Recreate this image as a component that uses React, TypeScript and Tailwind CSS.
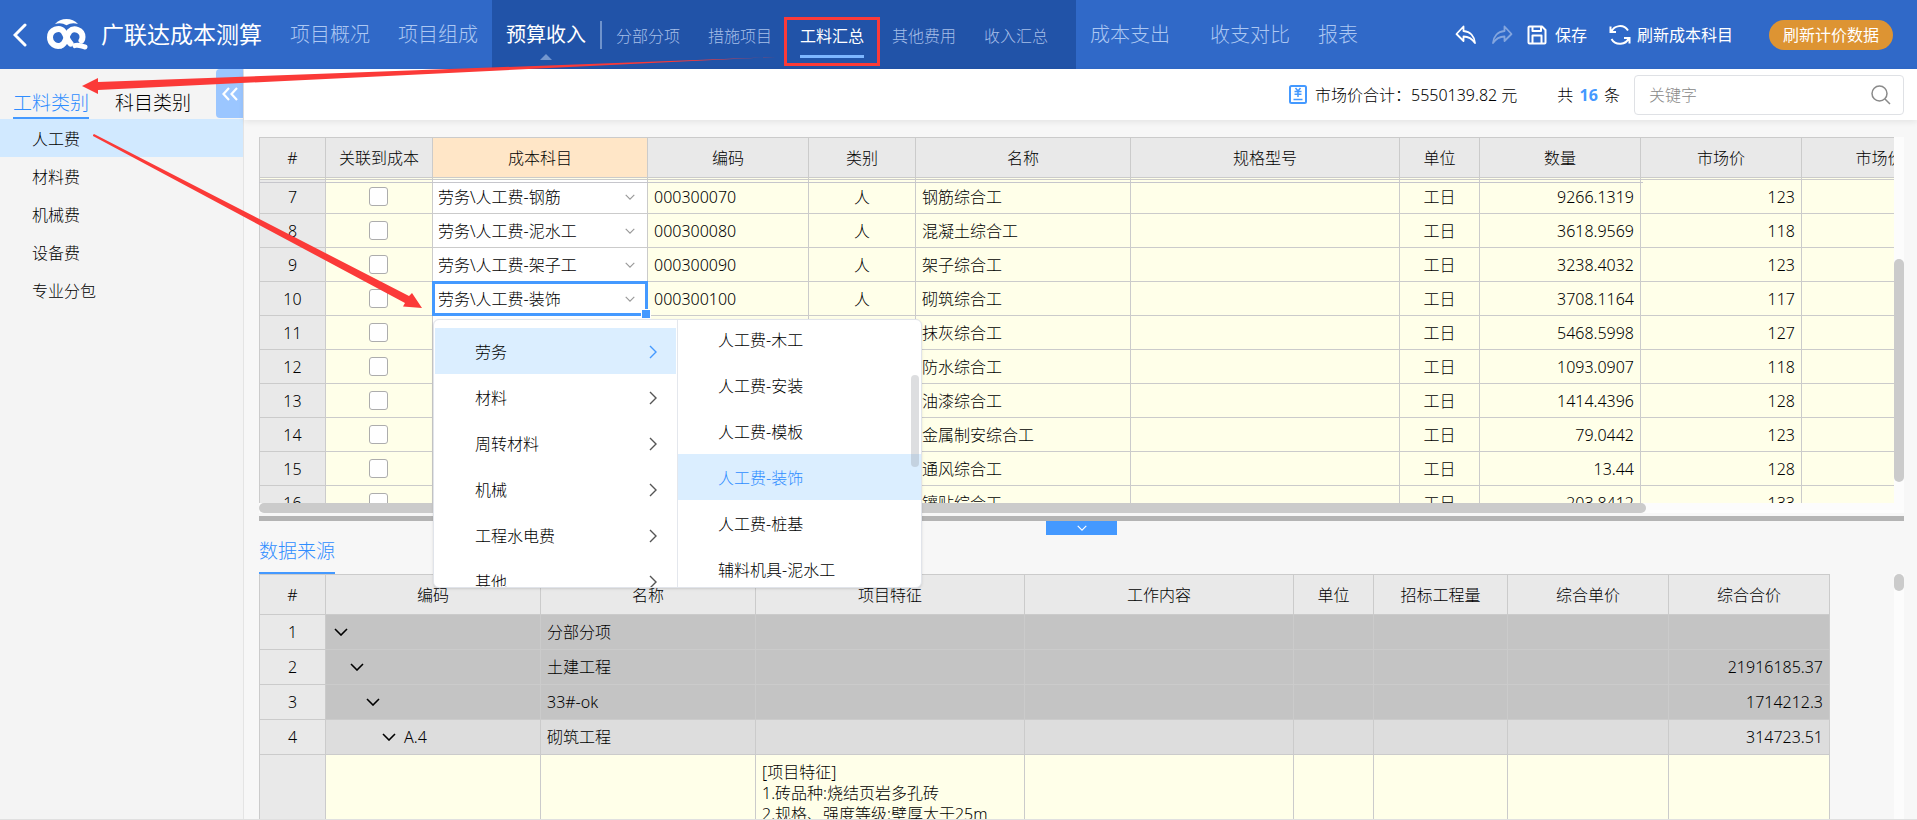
import clsx from 'clsx';
import type { ReactNode } from 'react';

interface Material {
  no: number;
  subject: string;
  code: string;
  name: string;
  qty: string;
  price: string;
}

interface SourceRow {
  no: number;
  depth: number;
  code?: string;
  name: string;
  total?: string;
}

const SUB_TABS = ['分部分项', '措施项目', '工料汇总', '其他费用', '收入汇总'];

const CATEGORIES = ['人工费', '材料费', '机械费', '设备费', '专业分包'];

const MATERIALS: Material[] = [
  { no: 7, subject: '劳务\\人工费-钢筋', code: '000300070', name: '钢筋综合工', qty: '9266.1319', price: '123' },
  { no: 8, subject: '劳务\\人工费-泥水工', code: '000300080', name: '混凝土综合工', qty: '3618.9569', price: '118' },
  { no: 9, subject: '劳务\\人工费-架子工', code: '000300090', name: '架子综合工', qty: '3238.4032', price: '123' },
  { no: 10, subject: '劳务\\人工费-装饰', code: '000300100', name: '砌筑综合工', qty: '3708.1164', price: '117' },
  { no: 11, subject: '', code: '', name: '抹灰综合工', qty: '5468.5998', price: '127' },
  { no: 12, subject: '', code: '', name: '防水综合工', qty: '1093.0907', price: '118' },
  { no: 13, subject: '', code: '', name: '油漆综合工', qty: '1414.4396', price: '128' },
  { no: 14, subject: '', code: '', name: '金属制安综合工', qty: '79.0442', price: '123' },
  { no: 15, subject: '', code: '', name: '通风综合工', qty: '13.44', price: '128' },
  { no: 16, subject: '', code: '', name: '镶贴综合工', qty: '203.8412', price: '133' },
];

const MATERIAL_COLS = [
  { title: '#', width: 66 },
  { title: '关联到成本', width: 107 },
  { title: '成本科目', width: 215 },
  { title: '编码', width: 161 },
  { title: '类别', width: 107 },
  { title: '名称', width: 215 },
  { title: '规格型号', width: 269 },
  { title: '单位', width: 80 },
  { title: '数量', width: 161 },
  { title: '市场价', width: 161 },
  { title: '市场价合计', width: 188 },
];

const SOURCE_COLS = [
  { title: '#', width: 66 },
  { title: '编码', width: 215 },
  { title: '名称', width: 215 },
  { title: '项目特征', width: 269 },
  { title: '工作内容', width: 269 },
  { title: '单位', width: 80 },
  { title: '招标工程量', width: 134 },
  { title: '综合单价', width: 161 },
  { title: '综合合价', width: 161 },
];

const SOURCE_ROWS: SourceRow[] = [
  { no: 1, depth: 0, name: '分部分项' },
  { no: 2, depth: 1, name: '土建工程', total: '21916185.37' },
  { no: 3, depth: 2, name: '33#-ok', total: '1714212.3' },
  { no: 4, depth: 3, code: 'A.4', name: '砌筑工程', total: '314723.51' },
];

const INDENT = ['pl-2', 'pl-6', 'pl-10', 'pl-14'];

const MENU_GROUPS = ['劳务', '材料', '周转材料', '机械', '工程水电费', '其他'];
const MENU_ITEMS = ['人工费-木工', '人工费-安装', '人工费-模板', '人工费-装饰', '人工费-桩基', '辅料机具-泥水工'];

const CELL = 'border-r border-b border-[#cbcbcb] overflow-hidden whitespace-nowrap';

function Chevron({ className }: { className?: string }) {
  return (
    <svg viewBox="0 0 14 8" fill="none" stroke="currentColor" strokeWidth="1.6" className={className} aria-hidden="true">
      <path d="M1 1l6 6 6-6" />
    </svg>
  );
}

function ChevronRight({ className }: { className?: string }) {
  return (
    <svg viewBox="0 0 8 14" fill="none" stroke="currentColor" strokeWidth="1.4" className={className} aria-hidden="true">
      <path d="M1 1l6 6-6 6" />
    </svg>
  );
}

function Logo() {
  return (
    <svg viewBox="0 0 41 31" className="h-[31px] w-[41px]" aria-hidden="true">
      <path d="M8 5C11 1.600 15 0 19.500 0S28 1.600 31 5C27 3.600 23 4 19.500 6.200C16 4 12 3.600 8 5Z" fill="#fff" />
      <g fill="none" stroke="#fff" strokeWidth="6" strokeLinecap="round">
        <path d="M14 26.500C9 28.500 3 24.500 3 18.500C3 10.500 12.500 7.500 16.500 12.500C19.500 16.500 20 21.500 23.500 24.500" />
        <path d="M14 26.500C20 24.500 18.500 17 22.500 12.500C27 8 35.500 11 35.500 18C35.500 19.500 35.200 20.500 34.500 21.500" />
        <path d="M28 26.600C31 25.200 34 27 38 28" strokeWidth="5" />
      </g>
    </svg>
  );
}

function UndoIcon({ flip }: { flip?: boolean }) {
  return (
    <svg
      viewBox="0 0 22 20"
      fill="none"
      stroke="currentColor"
      strokeWidth="1.8"
      strokeLinejoin="round"
      className={clsx('h-5 w-[22px]', flip && '-scale-x-100')}
      aria-hidden="true"
    >
      <path d="M8.500 1.500L1.500 9l7 7v-4.500c5 0 8.500 2 11.500 6.500C19.500 11.500 15.500 6.500 8.500 6Z" />
    </svg>
  );
}

function SaveIcon() {
  return (
    <svg viewBox="0 0 20 20" fill="none" stroke="currentColor" strokeWidth="2" strokeLinejoin="round" className="size-5" aria-hidden="true">
      <path d="M1.500 2.500a1 1 0 011-1H15l3.500 3.500v12.500a1 1 0 01-1 1h-15a1 1 0 01-1-1z" />
      <path d="M5.500 1.500V6H14V1.500M5.500 18.500v-8h9v8" />
    </svg>
  );
}

function RefreshIcon() {
  return (
    <svg viewBox="0 0 22 22" fill="none" stroke="currentColor" strokeWidth="2" className="size-[22px]" aria-hidden="true">
      <path d="M1.500 2.500V8H7M2.500 7.500C5 1.500 14.500-.5 19 6.500" />
      <path d="M20.500 19.500V14H15M19.500 14.500C17 20.500 7 22.500 2.500 15" />
    </svg>
  );
}

function BillIcon() {
  return (
    <svg viewBox="0 0 18 19" fill="none" stroke="#4499ff" strokeWidth="1.5" className="h-[19px] w-[18px]" aria-hidden="true">
      <rect x="1" y="1" width="16" height="17" rx="1.500" strokeWidth="2" />
      <path d="M6.500 3l2.500 3 2.500-3M5.500 6.500h7M5.500 9.300h7M9 6v6M4.500 14.500h9" />
    </svg>
  );
}

function NavButton({ children, className }: { children: ReactNode; className?: string }) {
  return (
    <button type="button" className={clsx('px-3.5 text-xl whitespace-nowrap text-[#acc7f2]', className)}>
      {children}
    </button>
  );
}

function TopBar() {
  return (
    <header className="flex h-[69px] shrink-0 items-center bg-[#3069c8] pr-6 pl-[13px] text-white">
      <button type="button" aria-label="返回" className="mr-5">
        <svg viewBox="0 0 14 24" fill="none" stroke="#fff" strokeWidth="3" strokeLinecap="round" className="h-6 w-3.5" aria-hidden="true">
          <path d="M12 2L2 12l10 10" />
        </svg>
      </button>
      <Logo />
      <h1 className="mr-3.5 ml-[13px] text-[23px] font-normal whitespace-nowrap">广联达成本测算</h1>
      <nav className="flex h-full items-center">
        <NavButton>项目概况</NavButton>
        <NavButton>项目组成</NavButton>
        <div className="flex h-full items-center bg-[#2153a8] px-3.5">
          <button type="button" className="relative h-full text-xl font-normal whitespace-nowrap">
            预算收入
            <span className="absolute bottom-[9px] left-1/2 -ml-1.5 border-x-6 border-b-6 border-x-transparent border-b-[#7396cf]" />
          </button>
          <span className="ml-3.5 h-7 w-0.5 bg-[#6f93cc]" />
          <div className="flex h-full">
            {SUB_TABS.map((tab) => {
              const active = tab === '工料汇总';
              return (
                <button
                  key={tab}
                  type="button"
                  className={clsx(
                    'relative h-full px-3.5 pt-0.5 text-base whitespace-nowrap',
                    active ? 'font-normal text-white' : 'text-[#a6bfe8]',
                  )}
                >
                  {tab}
                  {active && (
                    <>
                      <span className="absolute inset-x-3.5 bottom-[11px] h-[3px] bg-[#7db6ff]" />
                      <span className="absolute inset-x-[-2px] top-[17px] bottom-[3px] border-3 border-[#fb3a38]" />
                    </>
                  )}
                </button>
              );
            })}
          </div>
        </div>
        <NavButton className="mr-3">成本支出</NavButton>
        <NavButton>收支对比</NavButton>
        <NavButton>报表</NavButton>
      </nav>
      <div className="ml-auto flex items-center text-base font-normal whitespace-nowrap">
        <button type="button" aria-label="撤销" className="mr-3.5">
          <UndoIcon />
        </button>
        <button type="button" aria-label="重做" className="mr-3.5 text-[#83a5de]">
          <UndoIcon flip />
        </button>
        <button type="button" className="mr-[22px] flex items-center gap-2">
          <SaveIcon />
          保存
        </button>
        <button type="button" className="mr-9 flex items-center gap-1.5">
          <RefreshIcon />
          刷新成本科目
        </button>
        <button type="button" className="h-[30px] rounded-full bg-[#dd9433] px-3.5">
          刷新计价数据
        </button>
      </div>
    </header>
  );
}

function Sidebar() {
  return (
    <aside className="w-[244px] shrink-0 border-r border-[#e4e4e4] bg-[#f4f4f4]">
      <div className="flex h-[50px] pl-[13px] text-[19px]">
        <button type="button" className="border-b-2 border-[#4499ff] pt-5 whitespace-nowrap text-[#2f8dff]">
          工料类别
        </button>
        <button type="button" className="ml-[26px] border-b-2 border-transparent pt-5 whitespace-nowrap text-black">
          科目类别
        </button>
        <button type="button" aria-label="收起" className="ml-auto flex h-[49px] w-[27px] items-center justify-center rounded-l-sm bg-[#9bc6ff]">
          <svg viewBox="0 0 16 14" fill="none" stroke="#fff" strokeWidth="2.2" className="h-3.5 w-4" aria-hidden="true">
            <path d="M7 1L1.500 7 7 13M15 1L9.500 7 15 13" />
          </svg>
        </button>
      </div>
      <ul>
        {CATEGORIES.map((item, i) => (
          <li key={item}>
            <button
              type="button"
              className={clsx('block h-[38px] w-full pt-0.5 pl-8 text-left text-base text-black', i === 0 && 'bg-[#d1e9ff]')}
            >
              {item}
            </button>
          </li>
        ))}
      </ul>
    </aside>
  );
}

function SummaryBar() {
  return (
    <div className="flex h-[51px] shrink-0 items-center justify-end bg-white pr-[13px] text-base whitespace-nowrap text-black shadow-[0_2px_6px_rgba(0,0,0,0.08)]">
      <BillIcon />
      <span className="ml-2">市场价合计：</span>
      <span>5550139.82 元</span>
      <span className="ml-10">
        共 <b className="mx-0.5 font-bold text-[#4499ff]">16</b> 条
      </span>
      <label className="ml-3.5 flex h-10 w-[270px] items-center rounded-sm border border-[#dfe1e5] pr-3 pl-3.5">
        <input
          type="text"
          aria-label="关键字"
          placeholder="关键字"
          className="min-w-0 flex-1 bg-transparent outline-none placeholder:text-[#888]"
        />
        <svg viewBox="0 0 20 20" fill="none" stroke="#8a8a8a" strokeWidth="1.5" className="size-5" aria-hidden="true">
          <circle cx="8.500" cy="8.500" r="7.500" />
          <path d="M14 14l5 5" />
        </svg>
      </label>
    </div>
  );
}

function MaterialTable() {
  return (
    <div className="relative min-w-0 flex-1 overflow-hidden">
      <table className="w-[1731px] table-fixed border-separate border-spacing-0 border-t border-l border-[#cbcbcb] text-base text-black">
        <colgroup>
          {MATERIAL_COLS.map((col) => (
            <col key={col.title} style={{ width: col.width }} />
          ))}
        </colgroup>
        <thead>
          <tr className="h-10">
            {MATERIAL_COLS.map((col) => (
              <th key={col.title} className={clsx(CELL, 'font-light', col.title === '成本科目' ? 'bg-[#ffe6c7]' : 'bg-[#e9e9e9]')}>
                {col.title}
              </th>
            ))}
          </tr>
        </thead>
        <tbody>
          {/* tail of the row scrolled under the header */}
          <tr className="h-0.5 bg-[#ffffe9]">
            {MATERIAL_COLS.map((col) => (
              <td key={col.title} className={clsx(CELL, 'p-0')} />
            ))}
          </tr>
          {MATERIALS.map((row) => {
            const selected = row.no === 10;
            return (
              <tr key={row.no} className="h-[34px] bg-[#ffffe9]">
                <td className={clsx(CELL, 'bg-[#e9e9e9] text-center')}>{row.no}</td>
                <td className={clsx(CELL, 'pr-0.5')}>
                  <input
                    type="checkbox"
                    aria-label={`关联到成本 ${row.no}`}
                    className="mx-auto block size-[19px] appearance-none rounded-[3px] border border-[#adadad] bg-white"
                  />
                </td>
                <td className="relative border-r border-b border-[#cbcbcb] bg-white p-0 whitespace-nowrap">
                  {row.subject && (
                    <button type="button" aria-haspopup="menu" className="flex w-full items-center justify-between pr-3 pl-[5px]">
                      {row.subject}
                      <Chevron className="h-1.5 w-2.5 text-[#999]" />
                    </button>
                  )}
                  {selected && (
                    <>
                      <span className="pointer-events-none absolute -inset-px border-[3px] border-[#4499ff]" />
                      <span className="absolute -right-1 -bottom-1 z-10 size-2.5 border border-white bg-[#4499ff]" />
                    </>
                  )}
                </td>
                <td className={clsx(CELL, 'px-1.5')}>{row.code}</td>
                <td className={clsx(CELL, 'text-center')}>人</td>
                <td className={clsx(CELL, 'px-1.5')}>{row.name}</td>
                <td className={CELL} />
                <td className={clsx(CELL, 'text-center')}>工日</td>
                <td className={clsx(CELL, 'px-1.5 text-right')}>{row.qty}</td>
                <td className={clsx(CELL, 'px-1.5 text-right')}>{row.price}</td>
                <td className={CELL} />
              </tr>
            );
          })}
        </tbody>
      </table>
      <span className="absolute top-[45px] left-0 h-px w-[1384px] bg-[#c6c6cc]" />
    </div>
  );
}

function SourceTable() {
  return (
    <table className="w-[1571px] shrink-0 table-fixed border-separate border-spacing-0 border-t border-l border-[#cbcbcb] text-base text-black">
      <colgroup>
        {SOURCE_COLS.map((col) => (
          <col key={col.title} style={{ width: col.width }} />
        ))}
      </colgroup>
      <thead>
        <tr className="h-10 bg-[#e9e9e9]">
          {SOURCE_COLS.map((col) => (
            <th key={col.title} className={clsx(CELL, 'font-light')}>
              {col.title}
            </th>
          ))}
        </tr>
      </thead>
      <tbody>
        {SOURCE_ROWS.map((row) => (
          <tr key={row.no} className={clsx('h-[35px]', row.depth < 3 ? 'bg-[#c4c4c4]' : 'bg-[#dddddd]')}>
            <td className={clsx(CELL, 'bg-[#e9e9e9] text-center')}>{row.no}</td>
            <td className={CELL}>
              <div className={clsx('flex items-center gap-2', INDENT[row.depth])}>
                <button type="button" aria-label="收起">
                  <Chevron className="h-2 w-3.5" />
                </button>
                {row.code}
              </div>
            </td>
            <td className={clsx(CELL, 'px-1.5')}>{row.name}</td>
            <td className={CELL} />
            <td className={CELL} />
            <td className={CELL} />
            <td className={CELL} />
            <td className={CELL} />
            <td className={clsx(CELL, 'px-1.5 text-right')}>{row.total}</td>
          </tr>
        ))}
        <tr className="h-24 bg-[#ffffe9]">
          <td className={clsx(CELL, 'bg-[#e9e9e9]')} />
          <td className={CELL} />
          <td className={CELL} />
          <td className={clsx(CELL, 'px-1.5 py-[7px] align-top leading-[21px]')}>
            [项目特征]
            <br />
            1.砖品种:烧结页岩多孔砖
            <br />
            2.规格、强度等级:壁厚大于25m
          </td>
          <td className={CELL} />
          <td className={CELL} />
          <td className={CELL} />
          <td className={CELL} />
          <td className={CELL} />
        </tr>
      </tbody>
    </table>
  );
}

function SubjectMenu() {
  return (
    <div
      role="menu"
      className="absolute top-[182px] left-[174px] z-20 flex h-[269px] w-[489px] overflow-hidden rounded-md border border-[#e1e4ea] bg-white text-base text-black shadow-sm"
    >
      <ul className="w-[244px] border-r border-[#e4e7ed] px-px pt-2">
        {MENU_GROUPS.map((group, i) => (
          <li key={group}>
            <button
              type="button"
              role="menuitem"
              className={clsx('flex h-[46px] w-full items-center justify-between pt-0.5 pr-[19px] pl-10', i === 0 && 'bg-[#dbeeff]')}
            >
              {group}
              <ChevronRight className={clsx('h-3.5 w-2', i === 0 ? 'text-[#4499ff]' : 'text-[#555]')} />
            </button>
          </li>
        ))}
      </ul>
      <ul className="-mt-1 flex-1">
        {MENU_ITEMS.map((item) => (
          <li key={item}>
            <button
              type="button"
              role="menuitem"
              className={clsx('block h-[46px] w-full pt-0.5 pl-10 text-left', item === '人工费-装饰' && 'bg-[#dbeeff] text-[#2f8dff]')}
            >
              {item}
            </button>
          </li>
        ))}
      </ul>
      <span className="absolute top-[55px] right-0.5 h-[92px] w-2 rounded-full bg-[#9093994d]" />
    </div>
  );
}

function Annotations() {
  return (
    <svg className="pointer-events-none absolute inset-0 z-30 h-full w-full" fill="#fb3a38" aria-hidden="true">
      <polygon points="82,86 98,78 98,82 776,57 98,90 98,94" />
      <polygon points="93,135 94,134 409,296 412,293 422,308 403,306.500 405,303 93,136" />
    </svg>
  );
}

export default function App() {
  return (
    <div className="relative flex h-screen flex-col overflow-hidden border-b border-[#e0e0e0] bg-[#f7f7f7] font-['Noto_Sans','Noto_Sans_CJK_SC',sans-serif] font-light">
      <TopBar />
      <div className="flex min-h-0 flex-1">
        <Sidebar />
        <main className="flex min-w-0 flex-1 flex-col">
          <SummaryBar />
          <div className="relative mt-[17px] mr-[13px] ml-[15px] flex min-h-0 flex-1 flex-col">
            <section className="flex h-[376px] shrink-0 flex-col">
              <div className="flex min-h-0 flex-1">
                <MaterialTable />
                <div className="w-2.5 bg-[#fcfcfc] pt-[122px]">
                  <div className="h-[223px] rounded-full bg-[#cbcbcb]" />
                </div>
              </div>
              <div className="h-2.5 bg-[#fcfcfc]">
                <div className="h-full w-[84.3%] rounded-full bg-[#cbcbcb]" />
              </div>
            </section>
            <div className="mt-[3px] h-[5px] shrink-0 bg-[#b4b4b4]" />
            <button
              type="button"
              aria-label="收起数据来源"
              className="flex h-3.5 w-[71px] shrink-0 items-center justify-center self-center bg-[#4499ff] text-white"
            >
              <Chevron className="h-1.5 w-2.5" />
            </button>
            <div className="flex h-[39px] shrink-0">
              <h2 className="border-b-2 border-[#4499ff] text-[19px] leading-8 text-[#2f8dff]">数据来源</h2>
            </div>
            <section className="flex min-h-0 flex-1 justify-between overflow-hidden">
              <SourceTable />
              <div className="w-2.5 bg-[#fcfcfc]">
                <div className="h-[17px] rounded-full bg-[#cbcbcb]" />
              </div>
            </section>
            <SubjectMenu />
          </div>
        </main>
      </div>
      <Annotations />
    </div>
  );
}
